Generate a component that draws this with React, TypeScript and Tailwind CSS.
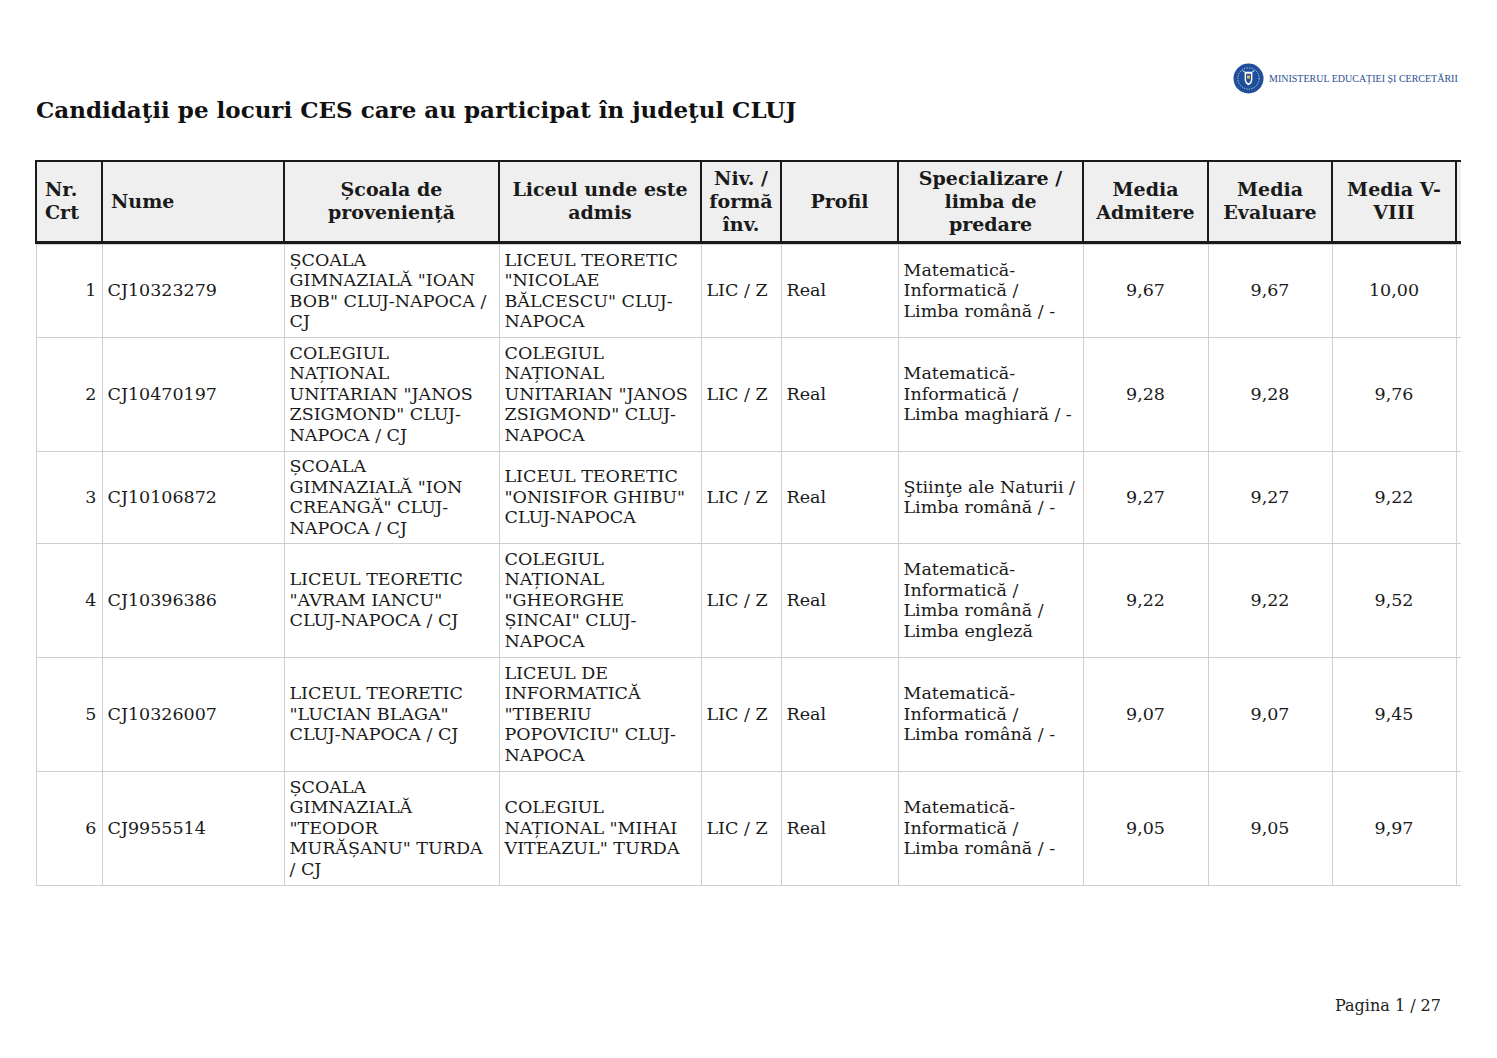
import React from 'react';

type Row = {
  nr: number;
  nume: string;
  scoala: string;
  liceu: string;
  niv: string;
  profil: string;
  spec: string;
  admitere: string;
  evaluare: string;
  media58: string;
  h: string;
};

const rows: Row[] = [
  {
    nr: 1,
    nume: 'CJ10323279',
    scoala: 'ȘCOALA GIMNAZIALĂ "IOAN BOB" CLUJ-NAPOCA / CJ',
    liceu: 'LICEUL TEORETIC "NICOLAE BĂLCESCU" CLUJ-NAPOCA',
    niv: 'LIC / Z',
    profil: 'Real',
    spec: 'Matematică-Informatică / Limba română / -',
    admitere: '9,67',
    evaluare: '9,67',
    media58: '10,00',
    h: 'h-[93px]',
  },
  {
    nr: 2,
    nume: 'CJ10470197',
    scoala: 'COLEGIUL NAȚIONAL UNITARIAN "JANOS ZSIGMOND" CLUJ-NAPOCA / CJ',
    liceu: 'COLEGIUL NAȚIONAL UNITARIAN "JANOS ZSIGMOND" CLUJ-NAPOCA',
    niv: 'LIC / Z',
    profil: 'Real',
    spec: 'Matematică-Informatică / Limba maghiară / -',
    admitere: '9,28',
    evaluare: '9,28',
    media58: '9,76',
    h: 'h-[114px]',
  },
  {
    nr: 3,
    nume: 'CJ10106872',
    scoala: 'ȘCOALA GIMNAZIALĂ "ION CREANGĂ" CLUJ-NAPOCA / CJ',
    liceu: 'LICEUL TEORETIC "ONISIFOR GHIBU" CLUJ-NAPOCA',
    niv: 'LIC / Z',
    profil: 'Real',
    spec: 'Ştiinţe ale Naturii / Limba română / -',
    admitere: '9,27',
    evaluare: '9,27',
    media58: '9,22',
    h: 'h-[92px]',
  },
  {
    nr: 4,
    nume: 'CJ10396386',
    scoala: 'LICEUL TEORETIC "AVRAM IANCU" CLUJ-NAPOCA / CJ',
    liceu: 'COLEGIUL NAȚIONAL "GHEORGHE ȘINCAI" CLUJ-NAPOCA',
    niv: 'LIC / Z',
    profil: 'Real',
    spec: 'Matematică-Informatică / Limba română / Limba engleză',
    admitere: '9,22',
    evaluare: '9,22',
    media58: '9,52',
    h: 'h-[114px]',
  },
  {
    nr: 5,
    nume: 'CJ10326007',
    scoala: 'LICEUL TEORETIC "LUCIAN BLAGA" CLUJ-NAPOCA / CJ',
    liceu: 'LICEUL DE INFORMATICĂ "TIBERIU POPOVICIU" CLUJ-NAPOCA',
    niv: 'LIC / Z',
    profil: 'Real',
    spec: 'Matematică-Informatică / Limba română / -',
    admitere: '9,07',
    evaluare: '9,07',
    media58: '9,45',
    h: 'h-[114px]',
  },
  {
    nr: 6,
    nume: 'CJ9955514',
    scoala: 'ȘCOALA GIMNAZIALĂ "TEODOR MURĂȘANU" TURDA / CJ',
    liceu: 'COLEGIUL NAȚIONAL "MIHAI VITEAZUL" TURDA',
    niv: 'LIC / Z',
    profil: 'Real',
    spec: 'Matematică-Informatică / Limba română / -',
    admitere: '9,05',
    evaluare: '9,05',
    media58: '9,97',
    h: 'h-[114px]',
  },
];

// ministry emblem, rough drawing
function Emblem() {
  return (
    <svg width="31" height="31" viewBox="0 0 32 32">
      <circle cx="16" cy="16" r="15.5" fill="#1f4f9a" />
      <circle cx="16" cy="16" r="11" fill="none" stroke="#ffffff" strokeWidth="0.8" strokeDasharray="1.2 1.4" />
      <path d="M12 9h8v8c0 3-2 5-4 6-2-1-4-3-4-6z" fill="#ffffff" />
      <path d="M13.5 11h5v6c0 2-1.3 3.3-2.5 4-1.2-.7-2.5-2-2.5-4z" fill="#1f4f9a" />
      <path d="M14.5 13h3v3h-3z" fill="#e3c24a" />
      <path d="M10 8l2 1M22 8l-2 1" stroke="#ffffff" strokeWidth="1" />
    </svg>
  );
}

export default function App() {
  const head =
    'border-2 border-b-[3px] border-[#1a1a1a] bg-[#efefef] font-bold text-center align-middle px-1 leading-[23px]';
  const cell = 'border border-[#cfcfcf] align-middle px-[5px] leading-[20.5px]';

  return (
    <div className="w-[1497px] h-[1058px] bg-white relative" style={{ fontFamily: '"DejaVu Serif", serif' }}>
      <div className="absolute left-[1233px] top-[63px] flex items-center gap-[5px]">
        <Emblem />
        <span
          className="text-[#2a4f92] text-[10px]"
          style={{ fontFamily: '"Liberation Serif", serif' }}
        >
          MINISTERUL EDUCAȚIEI ȘI CERCETĂRII
        </span>
      </div>

      <div className="pt-[95px] pl-[36px]">
        <h1 className="text-[23px] font-bold text-[#111] leading-[30px]">
          Candidaţii pe locuri CES care au participat în judeţul CLUJ
        </h1>
      </div>

      <div className="ml-[35px] mt-[35px] w-[1426px] overflow-hidden">
        <table className="border-collapse table-fixed w-[1500px] text-[#1a1a1a]">
          <colgroup>
            <col className="w-[66px]" />
            <col className="w-[182px]" />
            <col className="w-[215px]" />
            <col className="w-[202px]" />
            <col className="w-[80px]" />
            <col className="w-[117px]" />
            <col className="w-[185px]" />
            <col className="w-[125px]" />
            <col className="w-[124px]" />
            <col className="w-[124px]" />
            <col className="w-[80px]" />
          </colgroup>
          <thead>
            <tr className="h-[81px] text-[19px]">
              <th className={`${head} text-left pl-[8px]`}>Nr.<br />Crt</th>
              <th className={`${head} text-left pl-[8px]`}>Nume</th>
              <th className={head}>Școala de<br />proveniență</th>
              <th className={head}>Liceul unde este<br />admis</th>
              <th className={head}>Niv. /<br />formă<br />înv.</th>
              <th className={head}>Profil</th>
              <th className={head}>Specializare /<br />limba de<br />predare</th>
              <th className={head}>Media<br />Admitere</th>
              <th className={head}>Media<br />Evaluare</th>
              <th className={head}>Media V-<br />VIII</th>
              <th className={head}></th>
            </tr>
          </thead>
          <tbody className="text-[17.5px]">
            <tr className="h-[1px]">
              <td colSpan={11} className="p-0 border-0" />
            </tr>
            {rows.map((r) => (
              <tr key={r.nr} className={r.h}>
                <td className={`${cell} text-right`}>{r.nr}</td>
                <td className={cell}>{r.nume}</td>
                <td className={cell}>{r.scoala}</td>
                <td className={cell}>{r.liceu}</td>
                <td className={cell}>{r.niv}</td>
                <td className={cell}>{r.profil}</td>
                <td className={cell}>{r.spec}</td>
                <td className={`${cell} text-center`}>{r.admitere}</td>
                <td className={`${cell} text-center`}>{r.evaluare}</td>
                <td className={`${cell} text-center`}>{r.media58}</td>
                <td className={cell}></td>
              </tr>
            ))}
          </tbody>
        </table>
      </div>

      <div className="absolute left-[1335px] top-[994px] text-[16px] text-[#222]">Pagina 1 / 27</div>
    </div>
  );
}
